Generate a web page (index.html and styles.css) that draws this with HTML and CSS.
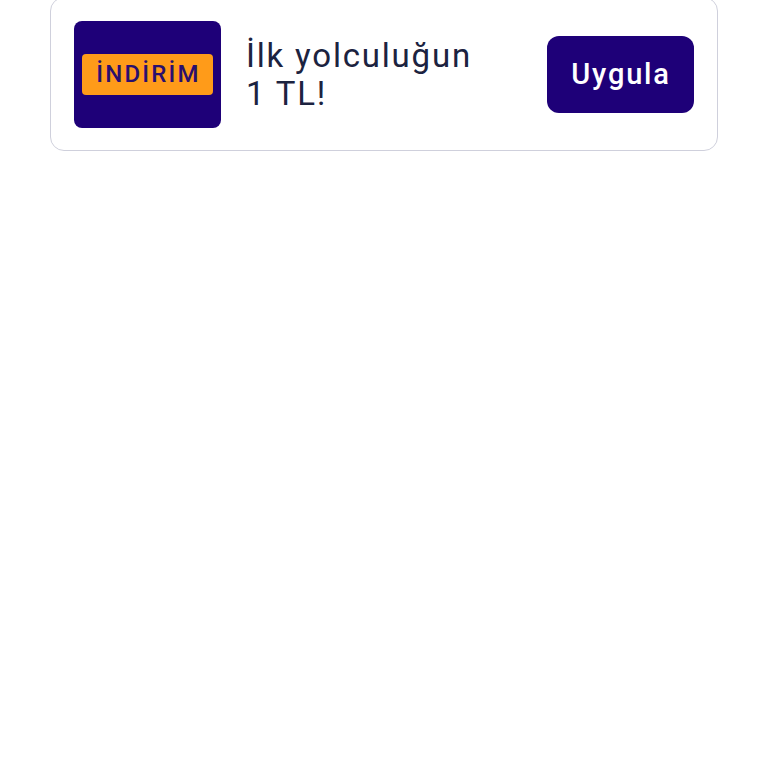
FILE: index.html
```html
<!DOCTYPE html>
<html lang="tr">
<head>
<meta charset="utf-8">
<link rel="stylesheet" href="styles.css">
</head>
<body>
<div class="card">
  <div class="badge"><span class="label">İNDİRİM</span></div>
  <div class="msg">İlk yolculuğun<br>1 TL!</div>
  <button class="apply">Uygula</button>
</div>
</body>
</html>
```
FILE: styles.css
```css
html, body { margin: 0; padding: 0; background: #fff; }
body { font-family: Roboto, "Noto Sans", "Liberation Sans", sans-serif; }
.card {
  box-sizing: border-box;
  width: 668px;
  margin: -3px 0 0 50px;
  height: 154px;
  border: 1.5px solid #cfd0dc;
  border-radius: 14px;
  padding: 0 23px;
  display: flex;
  align-items: center;
}
.badge {
  width: 147px;
  height: 107px;
  background: #1e0078;
  border-radius: 8px;
  display: flex;
  align-items: center;
  justify-content: center;
  flex-shrink: 0;
}
.label {
  box-sizing: border-box;
  width: 131px;
  height: 41px;
  background: #ff9b19;
  border-radius: 4px;
  color: #2a0f6e;
  font-size: 24px;
  font-weight: 500;
  display: flex;
  align-items: center;
  justify-content: center;
  letter-spacing: 2.2px;
  padding-left: 2px;
}
.msg {
  flex: 1;
  margin-left: 25px;
  color: #1c2340;
  font-size: 33px;
  line-height: 38px;
  font-weight: 400;
  letter-spacing: 1.8px;
  padding-top: 2px;
}
.apply {
  width: 147px;
  height: 77px;
  border: none;
  border-radius: 12px;
  background: #1e0078;
  color: #fff;
  font-family: inherit;
  font-size: 29px;
  font-weight: 500;
  letter-spacing: 1.8px;
  padding: 0 0 0 1px;
}
```
